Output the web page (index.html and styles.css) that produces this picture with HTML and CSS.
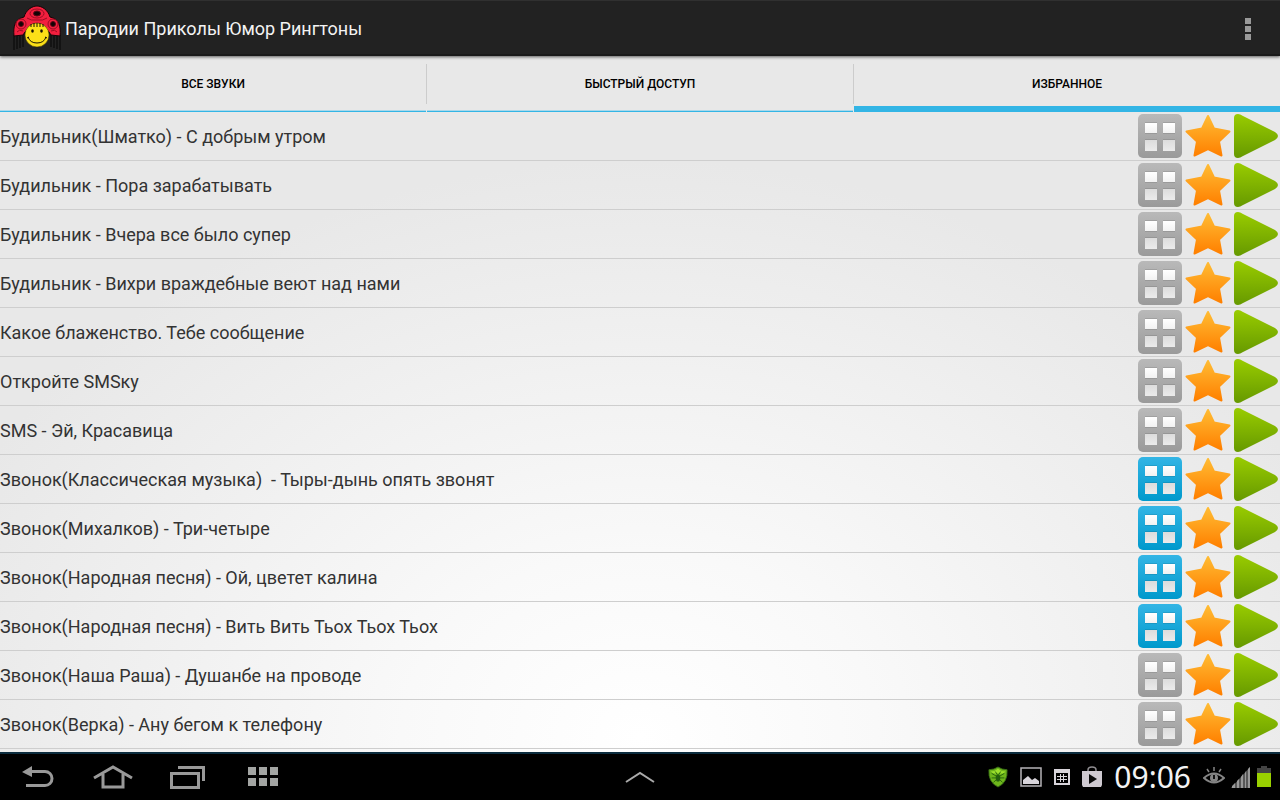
FILE: index.html
```
<!DOCTYPE html>
<html lang="ru">
<head>
    <meta charset="UTF-8">
    <meta name="viewport" content="width=device-width, initial-scale=1.0">
    <title>Пародии Приколы Юмор Рингтоны</title>
    <link rel="stylesheet" href="styles.css">
</head>
<body>
    <!-- Shared icons -->
    <svg class="sprite" aria-hidden="true">
        <defs>
            <linearGradient id="gray-fill" x1="0" y1="0" x2="0" y2="1">
                <stop offset="0" stop-color="#b9b9b9"/>
                <stop offset="1" stop-color="#9a9a9a"/>
            </linearGradient>
            <linearGradient id="blue-fill" x1="0" y1="0" x2="0" y2="1">
                <stop offset="0" stop-color="#33b5e5"/>
                <stop offset="1" stop-color="#0099cc"/>
            </linearGradient>
            <linearGradient id="star-fill" x1="0" y1="0" x2="0" y2="1">
                <stop offset="0" stop-color="#ffbb33"/>
                <stop offset="1" stop-color="#ff8000"/>
            </linearGradient>
            <linearGradient id="play-fill" x1="0" y1="0" x2="0" y2="1">
                <stop offset="0" stop-color="#99cc00"/>
                <stop offset="1" stop-color="#669900"/>
            </linearGradient>
            <linearGradient id="hole-top" x1="0" y1="0" x2="0" y2="1">
                <stop offset="0" stop-color="#ffffff"/>
                <stop offset="1" stop-color="#f2f2f2"/>
            </linearGradient>
            <linearGradient id="hole-bottom" x1="0" y1="0" x2="0" y2="1">
                <stop offset="0" stop-color="#dcdcdc"/>
                <stop offset="1" stop-color="#ebebeb"/>
            </linearGradient>
            <g id="holes">
                <path d="M9 10h12v12H9zM27 10h12v12H27zM9 27h12v12H9zM27 27h12v12H27z" fill="#000" opacity=".1"/>
                <path d="M9 11h12v10H9zM27 11h12v10H27z" fill="url(#hole-top)"/>
                <path d="M9 28h12v11H9zM27 28h12v11H27z" fill="url(#hole-bottom)"/>
            </g>
            <symbol id="grid-off" viewBox="0 0 48 48">
                <rect x="2" y="2" width="44" height="44" rx="5" fill="url(#gray-fill)"/>
                <use href="#holes"/>
            </symbol>
            <symbol id="grid-on" viewBox="0 0 48 48">
                <rect x="2" y="2" width="44" height="44" rx="5" fill="url(#blue-fill)"/>
                <use href="#holes"/>
            </symbol>
            <symbol id="star" viewBox="0 0 48 48">
                <path d="M24 4L30 16.500L45.500 19.500L35 29.500L37.500 43.500L24 37L10.500 43.500L13 29.500L2.500 19.500L18 16.500Z" fill="url(#star-fill)" stroke="url(#star-fill)" stroke-width="2" stroke-linejoin="round"/>
            </symbol>
            <symbol id="play" viewBox="0 0 48 48">
                <path d="M2 6Q2 2 6 2Q8 2 11 4L43 20Q46 22 46 24Q46 26 43 28L11 44Q8 46 6 46Q2 46 2 42Z" fill="url(#play-fill)"/>
            </symbol>
        </defs>
    </svg>

    <div class="screen">
        <header class="action-bar">
            <svg class="logo" viewBox="0 0 52 48" aria-hidden="true">
                <path d="M4 30v15M7 30v14M10 30v13M13 30v12M41 30v12M44 30v13M47 30v14M50 30v15" stroke="#050505"/>
                <path d="M4 31C3 21 5 14 14 12C16 5 22 1 27 1C32 1 38 5 40 12C49 14 51 21 50 31L41 30Q37 22 27 22Q17 22 13 30Z" fill="#f21f3e" stroke="#160406"/>
                <g fill="none" stroke="#9c0c22">
                    <path d="M17 13Q21 16 27 15Q33 16 37 13M7 27Q9 24 13 26M47 27Q45 24 41 26"/>
                    <ellipse cx="27" cy="8.500" rx="7" ry="4.500"/>
                    <circle cx="11" cy="19" r="5"/>
                    <circle cx="43" cy="19" r="5"/>
                </g>
                <g fill="#120305" stroke="#5c0815">
                    <ellipse cx="27" cy="8.500" rx="3.500" ry="2.500"/>
                    <circle cx="11" cy="19" r="2.500"/>
                    <circle cx="43" cy="19" r="2.500"/>
                </g>
                <circle cx="27" cy="30" r="12" fill="#fbe018" stroke="#2b2305" stroke-width=".5"/>
                <path d="M21 19v3M24 18v4M27 18v4M30 18v4M33 19v3" stroke="#171203" fill="none"/>
                <ellipse cx="22.500" cy="26" rx="1.300" ry="1.800" fill="#171203"/>
                <ellipse cx="31.500" cy="26" rx="1.300" ry="1.800" fill="#171203"/>
                <path d="M18 32Q20 38 27 38Q34 38 36 32M17 33l2-1M35 32l2 1" stroke="#171203" fill="none"/>
            </svg>
            <h1 class="title">Пародии Приколы Юмор Рингтоны</h1>
            <button class="overflow" aria-label="Меню">
                <svg width="6" height="22" viewBox="0 0 6 22"><path d="M0 0h6v6H0zM0 8h6v6H0zM0 16h6v6H0z" fill="#999"/></svg>
            </button>
        </header>

        <nav class="tabs">
            <button class="tab">ВСЕ ЗВУКИ</button>
            <button class="tab">БЫСТРЫЙ ДОСТУП</button>
            <button class="tab active">ИЗБРАННОЕ</button>
        </nav>

        <ul class="sounds" id="sounds">
            <!-- Rows are generated below -->
        </ul>

        <footer class="nav-bar">
            <div class="nav-keys">
                <button aria-label="Назад">
                    <svg width="32" height="24" viewBox="0 0 32 24"><path d="M0 7L10 1v4h13a8 8 0 0 1 0 17H4v-3h19a5 5 0 0 0 0-11H10v4z" fill="#999"/></svg>
                </button>
                <button aria-label="Домой">
                    <svg width="40" height="24" viewBox="0 0 40 24"><path d="M1 13L20 2L39 13M10 9v13h20V9" fill="none" stroke="#999" stroke-width="3"/></svg>
                </button>
                <button aria-label="Недавние">
                    <svg width="36" height="24" viewBox="0 0 36 24"><path d="M1.500 8.500h27v14h-27zM8 2.500h25.500V16" fill="none" stroke="#999" stroke-width="3"/></svg>
                </button>
                <button aria-label="Приложения">
                    <svg width="30" height="20" viewBox="0 0 30 20"><path d="M0 0h8v8H0zM11 0h8v8h-8zM22 0h8v8h-8zM0 11h8v8H0zM11 11h8v8h-8zM22 11h8v8h-8z" fill="#a3a5a3"/></svg>
                </button>
            </div>
            <button class="expand" aria-label="Развернуть">
                <svg width="30" height="12" viewBox="0 0 30 12"><path d="M1 11L15 2L29 11" fill="none" stroke="#aaa" stroke-width="2"/></svg>
            </button>
            <div class="status">
                <svg width="20" height="22" viewBox="0 0 22 24">
                    <path d="M11 1Q15 4 21 4Q22 18 11 23Q0 18 1 4Q7 4 11 1Z" fill="#6db51b" stroke="#386d15"/>
                    <path d="M11 3Q14 6 19 6Q18 9 11 8Q5 9 3 6Q8 6 11 3Z" fill="#9ce02d"/>
                    <path d="M4 8l5 3M18 8l-5 3M4 13h5M18 13h-5M6 18l3-3M16 18l-3-3M8 6l2 3M14 6l-2 3" stroke="#245f0c" fill="none"/>
                    <ellipse cx="11" cy="13" rx="2.500" ry="4" fill="#245f0c"/>
                </svg>
                <svg width="22" height="20" viewBox="0 0 22 20">
                    <path d="M1 1h20v18H1z" fill="none" stroke="#b5b2b6" stroke-width="1.500"/>
                    <path d="M3 17v-4l5-4 4 4 3-2 4 3v3z" fill="#d8d4da"/>
                </svg>
                <svg width="16" height="16" viewBox="0 0 16 16">
                    <path d="M0 0h16v16H0z" fill="#d8d4da"/>
                    <path d="M2 4h12v10H2z" fill="#000"/>
                    <path d="M3 7.500h10M3 10.500h10M6.500 5v8M9.500 5v8" stroke="#d8d4da"/>
                </svg>
                <svg width="20" height="22" viewBox="0 0 20 22">
                    <path d="M6 6V4Q6 1 10 1Q14 1 14 4V6" fill="none" stroke="#8f8d91" stroke-width="1.500"/>
                    <path d="M0 5h20v14l-1 2H1l-1-2z" fill="#cfcad1"/>
                    <path d="M7 8l8 5-8 5z" fill="#0b0b0b"/>
                </svg>
                <time class="clock">09:06</time>
                <div class="indicators">
                    <svg width="22" height="22" viewBox="0 0 22 22">
                        <path d="M1 12Q11 3 21 12Q11 21 1 12Z" fill="none" stroke="#858585" stroke-width="2"/>
                        <circle cx="11" cy="12" r="4" fill="#858585"/>
                        <path d="M11 9v4" stroke="#111" stroke-width="2"/>
                        <path d="M11 1v4M4 3l2 3M18 3l-2 3" stroke="#858585" stroke-width="1.500"/>
                    </svg>
                    <svg width="20" height="22" viewBox="0 0 20 22">
                        <path d="M0 22L19 1v21z" fill="#585858"/>
                        <path d="M1 22v-2l3-3v5zM6 22v-7l2-2v9zM10 22V11l2-3v14zM14 22V7l1-2v17zM17 22V3l2-2v21z" fill="#999"/>
                    </svg>
                    <svg width="14" height="22" viewBox="0 0 14 22">
                        <path d="M4 0h6v2h4v5H0V2h4z" fill="#444"/>
                        <path d="M0 7h14v14H0z" fill="#99d000"/>
                    </svg>
                </div>
            </div>
        </footer>
    </div>

    <script>
        // quick: the sound is pinned to the quick access tab
        const sounds = [
            { name: "Будильник(Шматко) - С добрым утром", quick: false },
            { name: "Будильник - Пора зарабатывать", quick: false },
            { name: "Будильник - Вчера все было супер", quick: false },
            { name: "Будильник - Вихри враждебные веют над нами", quick: false },
            { name: "Какое блаженство. Тебе сообщение", quick: false },
            { name: "Откройте SMSку", quick: false },
            { name: "SMS - Эй, Красавица", quick: false },
            { name: "Звонок(Классическая музыка)  - Тыры-дынь опять звонят", quick: true },
            { name: "Звонок(Михалков) - Три-четыре", quick: true },
            { name: "Звонок(Народная песня) - Ой, цветет калина", quick: true },
            { name: "Звонок(Народная песня) - Вить Вить Тьох Тьох Тьох", quick: true },
            { name: "Звонок(Наша Раша) - Душанбе на проводе", quick: false },
            { name: "Звонок(Верка) - Ану бегом к телефону", quick: false }
        ];

        const list = document.getElementById('sounds');

        function iconButton(icon, label) {
            return `<button class="icon-btn" aria-label="${label}"><svg width="48" height="48"><use href="#${icon}"/></svg></button>`;
        }

        sounds.forEach((sound) => {
            const row = document.createElement('li');
            row.className = 'sound';
            row.innerHTML = `<span class="name">${sound.name}</span>` +
                iconButton(sound.quick ? 'grid-on' : 'grid-off', 'Быстрый доступ') +
                iconButton('star', 'Избранное') +
                iconButton('play', 'Играть');
            list.appendChild(row);
        });
    </script>
</body>
</html>
```
FILE: styles.css
```
* {
    box-sizing: border-box;
}
body {
    margin: 0;
    font-family: Roboto, "Noto Sans", sans-serif;
    color: #333333;
}
button {
    border: 0;
    padding: 0;
    background: none;
    font-family: inherit;
    cursor: pointer;
}
svg {
    display: block;
}
.sprite {
    position: absolute;
    width: 0;
    height: 0;
}
.screen {
    display: flex;
    flex-direction: column;
    height: 100vh;
    background: radial-gradient(ellipse 58% 72% at 50% 92%, #ffffff 0%, #f9f9f9 32%, #e8e8e8 100%);
}

/* Top bar */
.action-bar {
    display: flex;
    align-items: center;
    flex: none;
    height: 56px;
    padding: 2px 29px 0 10px;
    background-color: #222222;
    border-top: 1px solid #303030;
    border-bottom: 2px solid #1a1a1a;
    box-shadow: 0 1px 3px rgba(0, 0, 0, 0.6);
    z-index: 1;
}
.logo {
    width: 52px;
    height: 48px;
}
.title {
    flex: 1;
    margin: 0 0 0 3px;
    font-size: 18px;
    font-weight: 400;
    color: #f3f3f3;
}

/* Tabs */
.tabs {
    display: flex;
    flex: none;
    gap: 1px;
    height: 56px;
    background-color: #e8e8e8;
}
.tab {
    position: relative;
    flex: 1;
    font-size: 12px;
    font-weight: 500;
    color: #000000;
    box-shadow: inset 0 -1px #33b5e5, inset 0 -2px #a9d8ea;
}
.tab + .tab::before {
    content: "";
    position: absolute;
    left: -1px;
    top: 8px;
    width: 1px;
    height: 40px;
    background-color: #cccccc;
}
.tab.active {
    box-shadow: inset 0 -6px #33b5e5;
}

/* Sound list */
.sounds {
    flex: 1;
    min-height: 0;
    margin: 0;
    padding: 0;
    overflow: hidden;
    list-style: none;
}
.sound {
    display: flex;
    align-items: center;
    height: 49px;
    border-bottom: 1px solid #cecece;
}
.name {
    flex: 1;
    font-size: 18px;
    white-space: pre;
}

/* Bottom bar */
.nav-bar {
    display: grid;
    grid-template-columns: 1fr auto 1fr;
    align-items: center;
    flex: none;
    height: 48px;
    background-color: #000000;
    border-top: 2px solid #0b2c3e;
}
.nav-keys {
    display: flex;
    align-items: center;
}
.nav-keys button {
    display: flex;
    justify-content: center;
    width: 75px;
}
.status {
    display: flex;
    align-items: center;
    justify-content: flex-end;
    gap: 12px;
    padding-right: 9px;
}
.clock {
    font-family: "Noto Sans", sans-serif;
    font-size: 30px;
    line-height: 40px;
    color: #f3f3f3;
}
.indicators {
    display: flex;
    align-items: center;
    gap: 6px;
}
```
